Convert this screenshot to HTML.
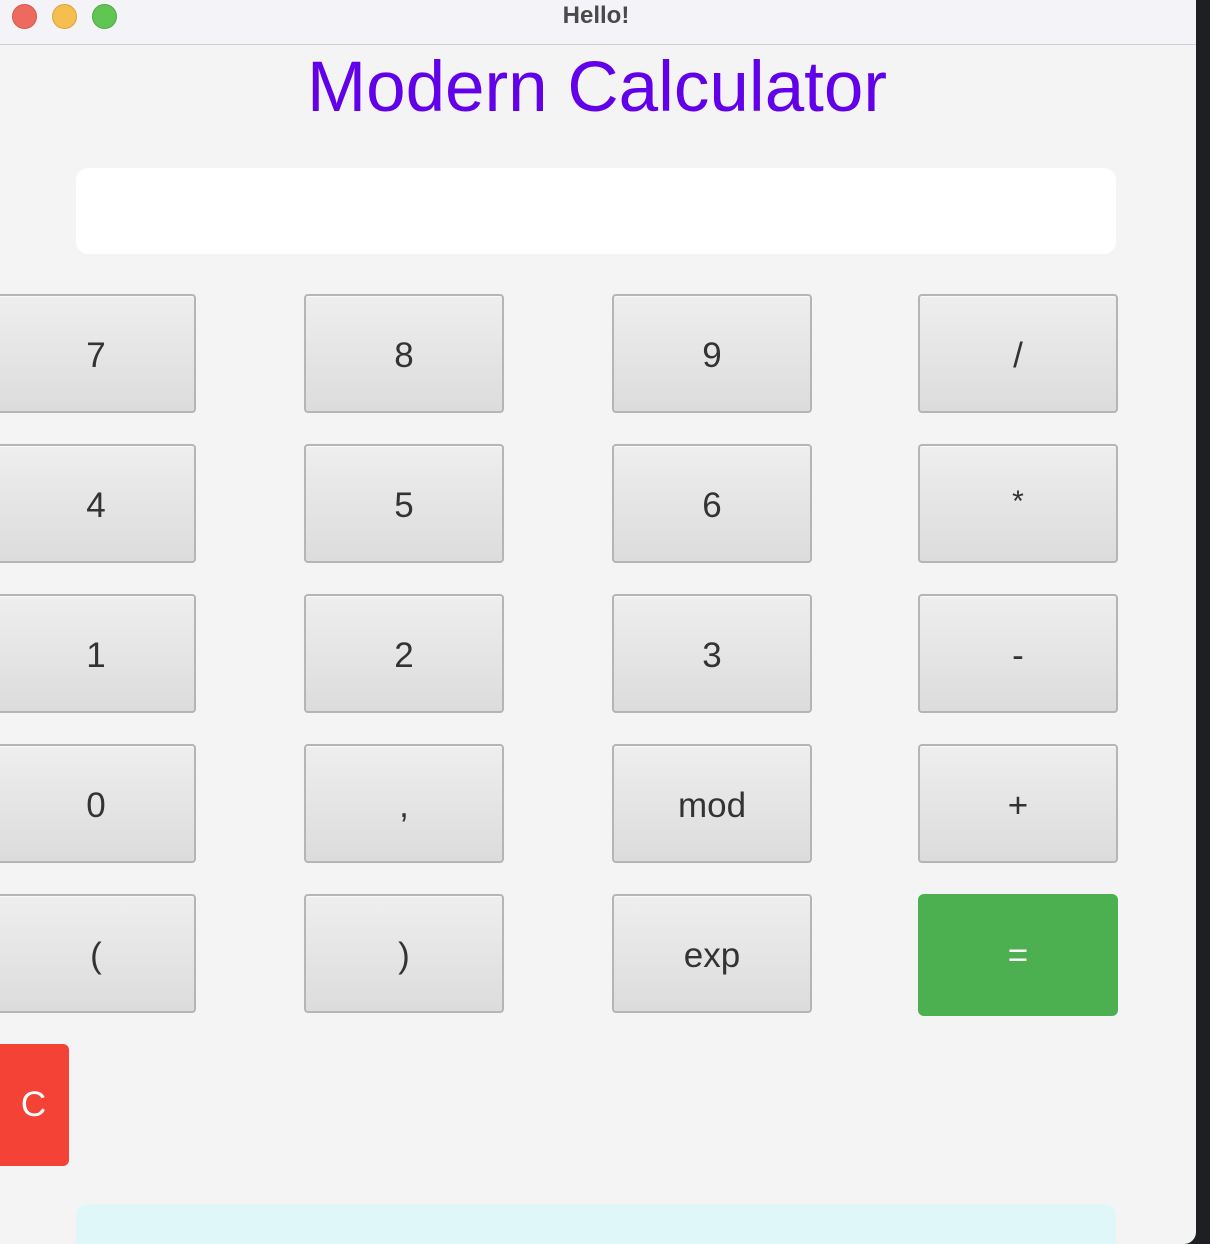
<!DOCTYPE html>
<html><head><meta charset="utf-8"><style>
html,body{margin:0;padding:0;width:1210px;height:1244px;overflow:hidden;background:#1e1f22;font-family:"Liberation Sans",sans-serif}
.win{position:absolute;left:0;top:0;width:1196px;height:1244px;background:#f4f4f4;border-bottom-right-radius:12px;overflow:hidden}
.bar{position:absolute;left:0;top:0;width:1196px;height:44px;background:#f4f3f8;border-bottom:1px solid #d0d0d0}
.dot{position:absolute;top:4px;width:23px;height:23px;border-radius:50%}
.ttl{position:absolute;left:0;width:1192px;top:2px;text-align:center;font-weight:bold;font-size:24px;color:#4a4a4a}
h1{position:absolute;left:0;width:1194px;top:45px;margin:0;text-align:center;font-weight:normal;font-size:71px;color:#6200ea;line-height:86px}
.disp{position:absolute;left:76px;top:168px;width:1040px;height:86px;background:#fff;border-radius:12px}
.b{position:absolute;width:196px;height:115px;border:2px solid #b5b5b5;border-radius:4px;background:linear-gradient(#eeeeee,#dcdcdc);box-shadow:inset 0 1px 0 #fafafa;color:#333;font-size:35px;text-align:center;line-height:119px}
.g{position:absolute;left:918px;top:894px;width:200px;height:122px;background:#4caf50;border-radius:6px;color:#fff;font-size:35px;text-align:center;line-height:124px}
.c{position:absolute;left:-10px;top:1044px;height:122px;background:#f44336;border-radius:6px;color:#fff;font-size:35px;text-align:center;line-height:122px;padding-left:8px;box-sizing:border-box;width:79px}
.cy{position:absolute;left:76px;top:1204px;width:1040px;height:60px;background:#e0f7fa;border-radius:12px}
</style></head><body>
<div class="win">
<div class="bar">
<div class="dot" style="left:12px;background:#ed6a5e;border:1px solid #d65a4f"></div>
<div class="dot" style="left:52px;background:#f5bf4f;border:1px solid #d9a43c"></div>
<div class="dot" style="left:92px;background:#61c554;border:1px solid #52a844"></div>
<div class="ttl">Hello!</div>
</div>
<h1>Modern Calculator</h1>
<div class="disp"></div>
<div class="b" style="left:-4px;top:294px">7</div>
<div class="b" style="left:304px;top:294px">8</div>
<div class="b" style="left:612px;top:294px">9</div>
<div class="b" style="left:918px;top:294px">/</div>
<div class="b" style="left:-4px;top:444px">4</div>
<div class="b" style="left:304px;top:444px">5</div>
<div class="b" style="left:612px;top:444px">6</div>
<div class="b" style="left:918px;top:444px;line-height:111px;font-size:30px">*</div>
<div class="b" style="left:-4px;top:594px">1</div>
<div class="b" style="left:304px;top:594px">2</div>
<div class="b" style="left:612px;top:594px">3</div>
<div class="b" style="left:918px;top:594px">-</div>
<div class="b" style="left:-4px;top:744px">0</div>
<div class="b" style="left:304px;top:744px">,</div>
<div class="b" style="left:612px;top:744px">mod</div>
<div class="b" style="left:918px;top:744px">+</div>
<div class="b" style="left:-4px;top:894px">(</div>
<div class="b" style="left:304px;top:894px">)</div>
<div class="b" style="left:612px;top:894px">exp</div>
<div class="g">=</div>
<div class="c">C</div>
<div class="cy"></div>
</div>
</body></html>
